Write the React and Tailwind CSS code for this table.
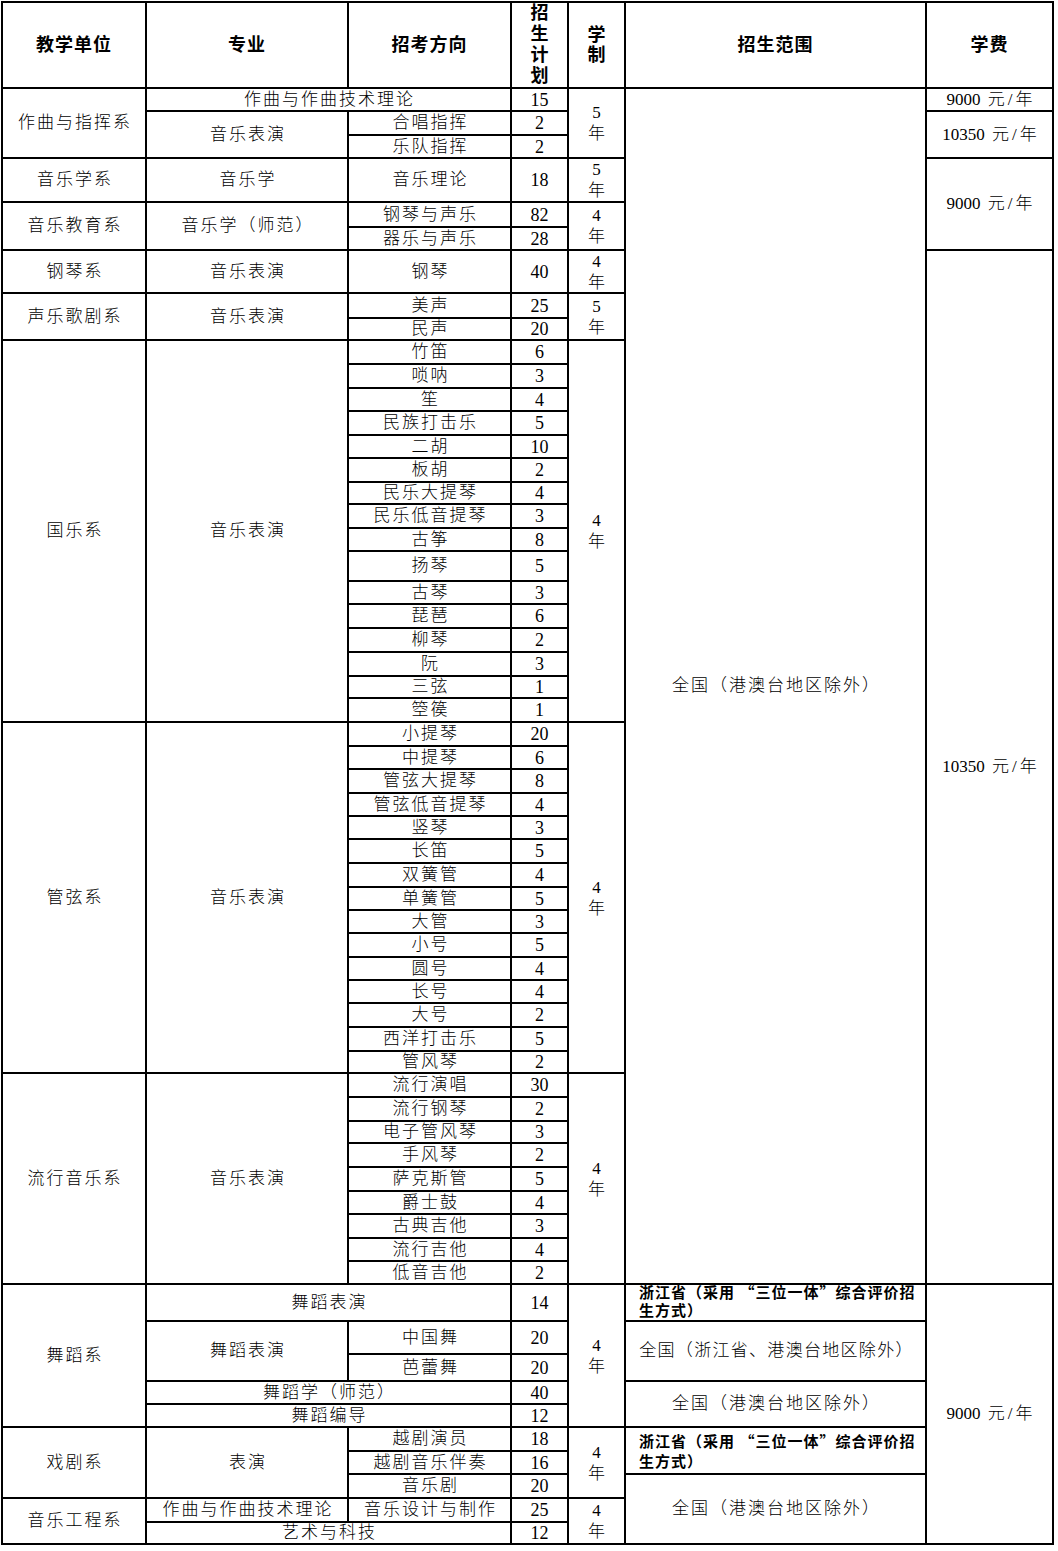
import React from "react";

const guoyue = [
  ["竹笛", "6", "row-start-11"],
  ["唢呐", "3", "row-start-12"],
  ["笙", "4", "row-start-13"],
  ["民族打击乐", "5", "row-start-14"],
  ["二胡", "10", "row-start-15"],
  ["板胡", "2", "row-start-16"],
  ["民乐大提琴", "4", "row-start-17"],
  ["民乐低音提琴", "3", "row-start-18"],
  ["古筝", "8", "row-start-19"],
  ["扬琴", "5", "row-start-20"],
  ["古琴", "3", "row-start-21"],
  ["琵琶", "6", "row-start-22"],
  ["柳琴", "2", "row-start-23"],
  ["阮", "3", "row-start-24"],
  ["三弦", "1", "row-start-25"],
  ["箜篌", "1", "row-start-26"],
];

const guanxian = [
  ["小提琴", "20", "row-start-27"],
  ["中提琴", "6", "row-start-28"],
  ["管弦大提琴", "8", "row-start-29"],
  ["管弦低音提琴", "4", "row-start-30"],
  ["竖琴", "3", "row-start-31"],
  ["长笛", "5", "row-start-32"],
  ["双簧管", "4", "row-start-33"],
  ["单簧管", "5", "row-start-34"],
  ["大管", "3", "row-start-35"],
  ["小号", "5", "row-start-36"],
  ["圆号", "4", "row-start-37"],
  ["长号", "4", "row-start-38"],
  ["大号", "2", "row-start-39"],
  ["西洋打击乐", "5", "row-start-40"],
  ["管风琴", "2", "row-start-41"],
];

const liuxing = [
  ["流行演唱", "30", "row-start-42"],
  ["流行钢琴", "2", "row-start-43"],
  ["电子管风琴", "3", "row-start-44"],
  ["手风琴", "2", "row-start-45"],
  ["萨克斯管", "5", "row-start-46"],
  ["爵士鼓", "4", "row-start-47"],
  ["古典吉他", "3", "row-start-48"],
  ["流行吉他", "4", "row-start-49"],
  ["低音吉他", "2", "row-start-50"],
];

const Cell = ({ className = "", children }) => (
  <div className={`flex items-center justify-center bg-white text-center ${className}`}>{children}</div>
);

// chinese text cell
const T = ({ className = "", children }) => (
  <Cell className={`whitespace-nowrap pl-[2px] text-[17px] leading-[20px] tracking-[2px] ${className}`}>
    {children}
  </Cell>
);

// number cell (招生计划)
const N = ({ className = "", children }) => (
  <Cell className={`col-start-4 text-[18px] leading-[20px] ${className}`}>{children}</Cell>
);

// 学制
const Y = ({ className = "", n }) => (
  <Cell className={`col-start-5 text-[17px] leading-[21px] ${className}`}>
    <div className="flex flex-col items-center">
      <span>{n}</span>
      <span>年</span>
    </div>
  </Cell>
);

const Fee = ({ className = "", amount }) => (
  <Cell className={`col-start-7 whitespace-nowrap pl-[3px] text-[17px] leading-[20px] ${className}`}>
    <span>
      {amount}
      <span className="tracking-[3px]"> 元/年</span>
    </span>
  </Cell>
);

const Zj = ({ className = "" }) => (
  <Cell className={`col-start-6 justify-start pl-[13px] text-left font-['Noto_Sans_CJK_SC',sans-serif] text-[15px] font-bold tracking-[1px] ${className}`}>
    <div>
      <div className="whitespace-nowrap">浙江省（采用 “三位一体”综合评价招</div>
      <div>生方式）</div>
    </div>
  </Cell>
);

const Rows = ({ list }) =>
  list.map(([name, n, row]) => (
    <React.Fragment key={name}>
      <T className={`col-start-3 ${row}`}>{name}</T>
      <N className={row}>{n}</N>
    </React.Fragment>
  ));

export default function App() {
  return (
    <div className="min-h-screen bg-white pl-[1px] pt-[1px] font-['Liberation_Serif','Noto_Sans_CJK_SC',serif] font-light text-black">
      <div className="grid w-fit grid-cols-[142px_200px_161px_55px_55px_299px_125px] grid-rows-[84px_21px_22px_21px_42px_23px_21px_41px_23px_20px_22px_22px_21px_22px_21px_22px_20px_22px_21px_28px_21px_22px_22px_22px_20px_22px_22px_21px_22px_21px_21px_22px_22px_21px_21px_22px_21px_21px_22px_22px_20px_22px_22px_20px_22px_22px_21px_22px_21px_21px_35px_31px_25px_21px_21px_22px_21px_22px_22px_20px] gap-[2px] bg-black p-[2px]">
        {/* header */}
        <Cell className="col-start-1 row-start-1 text-[18px] font-bold tracking-[1px]">教学单位</Cell>
        <Cell className="col-start-2 row-start-1 text-[18px] font-bold tracking-[1px]">专业</Cell>
        <Cell className="col-start-3 row-start-1 text-[18px] font-bold tracking-[1px]">招考方向</Cell>
        <Cell className="col-start-4 row-start-1 items-start text-[18px] font-bold leading-[21px]">
          <span className="w-[19px]">招生计划</span>
        </Cell>
        <Cell className="col-start-5 row-start-1 text-[18px] font-bold leading-[20px]">
          <span className="w-[19px]">学制</span>
        </Cell>
        <Cell className="col-start-6 row-start-1 text-[18px] font-bold tracking-[1px]">招生范围</Cell>
        <Cell className="col-start-7 row-start-1 text-[18px] font-bold tracking-[1px]">学费</Cell>

        {/* 作曲与指挥系 */}
        <T className="col-start-1 row-start-2 row-span-3">作曲与指挥系</T>
        <T className="col-start-2 col-span-2 row-start-2">作曲与作曲技术理论</T>
        <N className="row-start-2">15</N>
        <Y className="row-start-2 row-span-3" n="5" />
        <T className="col-start-6 row-start-2 row-span-49">全国（港澳台地区除外）</T>
        <Fee className="row-start-2" amount="9000" />
        <T className="col-start-2 row-start-3 row-span-2">音乐表演</T>
        <T className="col-start-3 row-start-3">合唱指挥</T>
        <N className="row-start-3">2</N>
        <T className="col-start-3 row-start-4">乐队指挥</T>
        <N className="row-start-4">2</N>
        <Fee className="row-start-3 row-span-2" amount="10350" />

        {/* 音乐学系 */}
        <T className="col-start-1 row-start-5">音乐学系</T>
        <T className="col-start-2 row-start-5">音乐学</T>
        <T className="col-start-3 row-start-5">音乐理论</T>
        <N className="row-start-5">18</N>
        <Y className="row-start-5" n="5" />
        <Fee className="row-start-5 row-span-3" amount="9000" />

        {/* 音乐教育系 */}
        <T className="col-start-1 row-start-6 row-span-2">音乐教育系</T>
        <T className="col-start-2 row-start-6 row-span-2">音乐学（师范）</T>
        <T className="col-start-3 row-start-6">钢琴与声乐</T>
        <N className="row-start-6">82</N>
        <T className="col-start-3 row-start-7">器乐与声乐</T>
        <N className="row-start-7">28</N>
        <Y className="row-start-6 row-span-2" n="4" />

        {/* 钢琴系 */}
        <T className="col-start-1 row-start-8">钢琴系</T>
        <T className="col-start-2 row-start-8">音乐表演</T>
        <T className="col-start-3 row-start-8">钢琴</T>
        <N className="row-start-8">40</N>
        <Y className="row-start-8" n="4" />
        <Fee className="row-start-8 row-span-43" amount="10350" />

        {/* 声乐歌剧系 */}
        <T className="col-start-1 row-start-9 row-span-2">声乐歌剧系</T>
        <T className="col-start-2 row-start-9 row-span-2">音乐表演</T>
        <T className="col-start-3 row-start-9">美声</T>
        <N className="row-start-9">25</N>
        <T className="col-start-3 row-start-10">民声</T>
        <N className="row-start-10">20</N>
        <Y className="row-start-9 row-span-2" n="5" />

        {/* 国乐系 */}
        <T className="col-start-1 row-start-11 row-span-16">国乐系</T>
        <T className="col-start-2 row-start-11 row-span-16">音乐表演</T>
        <Rows list={guoyue} />
        <Y className="row-start-11 row-span-16" n="4" />

        {/* 管弦系 */}
        <T className="col-start-1 row-start-27 row-span-15">管弦系</T>
        <T className="col-start-2 row-start-27 row-span-15">音乐表演</T>
        <Rows list={guanxian} />
        <Y className="row-start-27 row-span-15" n="4" />

        {/* 流行音乐系 */}
        <T className="col-start-1 row-start-42 row-span-9">流行音乐系</T>
        <T className="col-start-2 row-start-42 row-span-9">音乐表演</T>
        <Rows list={liuxing} />
        <Y className="row-start-42 row-span-9" n="4" />

        {/* 舞蹈系 */}
        <T className="col-start-1 row-start-51 row-span-5">舞蹈系</T>
        <T className="col-start-2 col-span-2 row-start-51">舞蹈表演</T>
        <N className="row-start-51">14</N>
        <Y className="row-start-51 row-span-5" n="4" />
        <Zj className="row-start-51 items-start leading-[18px] [&>div]:-mt-[2px]" />
        <Fee className="row-start-51 row-span-10" amount="9000" />
        <T className="col-start-2 row-start-52 row-span-2">舞蹈表演</T>
        <T className="col-start-3 row-start-52">中国舞</T>
        <N className="row-start-52">20</N>
        <T className="col-start-3 row-start-53">芭蕾舞</T>
        <N className="row-start-53">20</N>
        <Cell className="col-start-6 row-start-52 row-span-2 whitespace-nowrap pl-[2px] text-[17px] leading-[20px] tracking-[1.3px]">
          全国（浙江省、港澳台地区除外）
        </Cell>
        <T className="col-start-2 col-span-2 row-start-54">舞蹈学（师范）</T>
        <N className="row-start-54">40</N>
        <T className="col-start-6 row-start-54 row-span-2">全国（港澳台地区除外）</T>
        <T className="col-start-2 col-span-2 row-start-55">舞蹈编导</T>
        <N className="row-start-55">12</N>

        {/* 戏剧系 */}
        <T className="col-start-1 row-start-56 row-span-3">戏剧系</T>
        <T className="col-start-2 row-start-56 row-span-3">表演</T>
        <T className="col-start-3 row-start-56">越剧演员</T>
        <N className="row-start-56">18</N>
        <T className="col-start-3 row-start-57">越剧音乐伴奏</T>
        <N className="row-start-57">16</N>
        <T className="col-start-3 row-start-58">音乐剧</T>
        <N className="row-start-58">20</N>
        <Y className="row-start-56 row-span-3" n="4" />
        <Zj className="row-start-56 row-span-2 leading-[20px]" />
        <T className="col-start-6 row-start-58 row-span-3">全国（港澳台地区除外）</T>

        {/* 音乐工程系 */}
        <T className="col-start-1 row-start-59 row-span-2">音乐工程系</T>
        <T className="col-start-2 row-start-59">作曲与作曲技术理论</T>
        <T className="col-start-3 row-start-59">音乐设计与制作</T>
        <N className="row-start-59">25</N>
        <T className="col-start-2 col-span-2 row-start-60">艺术与科技</T>
        <N className="row-start-60">12</N>
        <Y className="row-start-59 row-span-2" n="4" />
      </div>
    </div>
  );
}
